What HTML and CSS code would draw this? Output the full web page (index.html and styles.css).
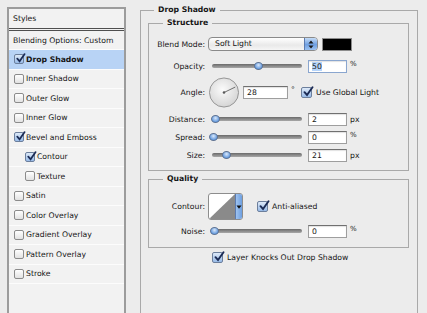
FILE: index.html
```html
<!DOCTYPE html>
<html lang="en">
<head>
    <meta charset="UTF-8">
    <title>Layer Style - Drop Shadow</title>
    <link rel="stylesheet" href="styles.css">
</head>
<body>
    <div class="styles-panel">
        <div class="panel-head">Styles</div>
        <div class="panel-blend">Blending Options: Custom</div>
        <ul class="style-list">
            <li class="selected"><span class="check on"><svg viewBox="0 0 12 12"><path d="M2.5 6.2 L5 9 L10.5 1.2"/></svg></span>Drop Shadow</li>
            <li><span class="check"></span>Inner Shadow</li>
            <li><span class="check"></span>Outer Glow</li>
            <li><span class="check"></span>Inner Glow</li>
            <li><span class="check on"><svg viewBox="0 0 12 12"><path d="M2.5 6.2 L5 9 L10.5 1.2"/></svg></span>Bevel and Emboss</li>
            <li class="sub"><span class="check on"><svg viewBox="0 0 12 12"><path d="M2.5 6.2 L5 9 L10.5 1.2"/></svg></span>Contour</li>
            <li class="sub"><span class="check"></span>Texture</li>
            <li><span class="check"></span>Satin</li>
            <li><span class="check"></span>Color Overlay</li>
            <li><span class="check"></span>Gradient Overlay</li>
            <li><span class="check"></span>Pattern Overlay</li>
            <li><span class="check"></span>Stroke</li>
        </ul>
    </div>

    <fieldset class="group outer">
        <legend>Drop Shadow</legend>

        <fieldset class="group structure">
            <legend>Structure</legend>
            <div class="rows">
                <div class="row row-blend">
                    <span class="label">Blend Mode:</span>
                    <div class="select">
                        <span class="select-text">Soft Light</span>
                        <span class="stepper">
                            <svg viewBox="0 0 6 9" width="6" height="9"><path d="M3 0.5 L5.5 3.5 L0.5 3.5 Z M3 8.5 L5.5 5.5 L0.5 5.5 Z"/></svg>
                        </span>
                    </div>
                    <span class="swatch"></span>
                </div>

                <div class="row">
                    <span class="label">Opacity:</span>
                    <div class="slider"><span class="thumb" style="left: 50%"></span></div>
                    <span class="field focused"><span class="sel">50</span></span>
                    <span class="unit pct">%</span>
                </div>

                <div class="row row-angle">
                    <span class="label">Angle:</span>
                    <svg class="dial" viewBox="0 0 32 32" width="32" height="31">
                        <defs>
                            <radialGradient id="dialFill" cx="45%" cy="40%" r="65%">
                                <stop offset="0" stop-color="#fbfbfb"/>
                                <stop offset="1" stop-color="#d2d2d2"/>
                            </radialGradient>
                        </defs>
                        <circle cx="16" cy="16" r="15" fill="url(#dialFill)" stroke="#939393"/>
                        <line x1="16" y1="16" x2="27.6" y2="10.4" stroke="#6a6a6a" stroke-width="1"/>
                        <circle cx="16" cy="16" r="1.3" fill="#5a5a5a"/>
                    </svg>
                    <span class="field wide">28</span>
                    <span class="unit deg">°</span>
                    <span class="check big on"><svg viewBox="0 0 12 12"><path d="M2.5 6.2 L5 9 L10.5 1.2"/></svg></span>
                    <span class="check-label">Use Global Light</span>
                </div>

                <div class="row">
                    <span class="label">Distance:</span>
                    <div class="slider"><span class="thumb" style="left: 2%"></span></div>
                    <span class="field">2</span>
                    <span class="unit">px</span>
                </div>

                <div class="row">
                    <span class="label">Spread:</span>
                    <div class="slider"><span class="thumb" style="left: 0%"></span></div>
                    <span class="field">0</span>
                    <span class="unit pct">%</span>
                </div>

                <div class="row">
                    <span class="label">Size:</span>
                    <div class="slider"><span class="thumb" style="left: 14%"></span></div>
                    <span class="field">21</span>
                    <span class="unit">px</span>
                </div>
            </div>
        </fieldset>

        <fieldset class="group quality">
            <legend>Quality</legend>
            <div class="rows">
                <div class="row row-contour">
                    <span class="label">Contour:</span>
                    <div class="contour">
                        <svg class="contour-curve" viewBox="0 0 26 26" width="26" height="25" preserveAspectRatio="none">
                            <path d="M0 26 L26 0 L26 26 Z" fill="#8a8a8a"/>
                        </svg>
                        <span class="contour-arrow">
                            <svg viewBox="0 0 6 4" width="6" height="4"><path d="M0.5 0.5 L5.5 0.5 L3 3.8 Z"/></svg>
                        </span>
                    </div>
                    <span class="check big on aa"><svg viewBox="0 0 12 12"><path d="M2.5 6.2 L5 9 L10.5 1.2"/></svg></span>
                    <span class="check-label">Anti-aliased</span>
                </div>

                <div class="row">
                    <span class="label">Noise:</span>
                    <div class="slider"><span class="thumb" style="left: 1%"></span></div>
                    <span class="field">0</span>
                    <span class="unit pct">%</span>
                </div>
            </div>
        </fieldset>

        <div class="row knockout">
            <span class="check big on"><svg viewBox="0 0 12 12"><path d="M2.5 6.2 L5 9 L10.5 1.2"/></svg></span>
            <span class="check-label">Layer Knocks Out Drop Shadow</span>
        </div>
    </fieldset>
</body>
</html>
```
FILE: styles.css
```css
* {
    box-sizing: border-box;
}
body {
    margin: 0;
    padding: 4px 0 0 7px;
    height: 313px;
    overflow: hidden;
    display: flex;
    align-items: flex-start;
    background-color: #ececec;
    font-family: "DejaVu Sans", Verdana, sans-serif;
    font-size: 7.7px;
    color: #161616;
}

/* left styles list */
.styles-panel {
    width: 119px;
    height: 330px;
    margin-top: 3px;
    border: 2px solid #9c9c9c;
    background: #f2f2f2;
    flex: none;
}
.panel-head {
    height: 22px;
    padding-left: 4px;
    display: flex;
    align-items: center;
    border-bottom: 3px double #4f4f4f;
}
.panel-blend {
    height: 19px;
    padding-left: 4px;
    display: flex;
    align-items: center;
    border-bottom: 1px solid #fcfcfc;
}
.style-list {
    list-style: none;
    margin: 0;
    padding: 0;
}
.style-list li {
    height: 19.5px;
    padding-left: 5px;
    display: flex;
    align-items: center;
    gap: 2px;
    border-bottom: 1px solid #fcfcfc;
}
.style-list li.sub {
    padding-left: 16px;
}
.style-list li.selected {
    background: #b8d3f5;
    font-weight: bold;
}

/* checkboxes */
.check {
    position: relative;
    flex: none;
    width: 10px;
    height: 10px;
    border: 1px solid #8b8b8b;
    border-radius: 2px;
    background: linear-gradient(#ffffff, #e2e2e2);
}
.check.on {
    border-color: #6c7f9c;
    background: linear-gradient(#dde9f8, #98bbe8);
}
.check svg {
    position: absolute;
    left: 0;
    top: -2px;
    width: 11px;
    height: 11px;
    fill: none;
    stroke: #1b2b55;
    stroke-width: 1.9;
    stroke-linecap: round;
}
.check.big {
    width: 11px;
    height: 11px;
}
.check.big svg {
    width: 12px;
    height: 12px;
}
.check-label {
    margin-left: 4px;
    white-space: nowrap;
}

/* group boxes */
.group {
    margin: 0;
    border: 1px solid #a9a9a9;
    min-inline-size: 0;
}
.group legend {
    font-weight: bold;
    line-height: 12px;
    padding: 0 4px;
}
.outer {
    flex: none;
    width: 278px;
    height: 330px;
    margin-left: 14px;
    padding: 0 8px 0 7px;
}
.outer > legend {
    margin-left: 6px;
}
.structure {
    margin-top: 1px;
    padding: 8px 0 8px 0;
}
.quality {
    margin-top: 2px;
    padding: 8px 0 9px 0;
}
.structure > legend,
.quality > legend {
    margin-left: 14px;
}

/* rows */
.rows {
    display: flex;
    flex-direction: column;
    gap: 4px;
}
.row {
    display: flex;
    align-items: center;
    height: 14px;
    flex: none;
}
.row-blend {
    margin-bottom: 4px;
}
.row-angle {
    height: 31px;
}
.row-contour {
    height: 27px;
}
.label {
    flex: none;
    width: 56px;
    margin-right: 3px;
    text-align: right;
    white-space: nowrap;
}

/* blend mode select */
.select {
    width: 110px;
    height: 14px;
    display: flex;
    border: 1px solid #8a8a8a;
    border-radius: 4px;
    background: linear-gradient(#ffffff, #e9e9e9 60%, #f6f6f6);
    overflow: hidden;
}
.select-text {
    flex: 1;
    padding-left: 6px;
    line-height: 12px;
}
.stepper {
    width: 13px;
    display: flex;
    align-items: center;
    justify-content: center;
    border-left: 1px solid #5b7bb0;
    background: linear-gradient(#c5dcf7, #6fa0e2 55%, #9cc2f1);
}
.stepper svg {
    fill: #1a1a1a;
}
.swatch {
    width: 30px;
    height: 13px;
    margin-left: 4px;
    background: #000;
    border: 1px solid #8c8c8c;
}

/* sliders */
.slider {
    position: relative;
    flex: none;
    width: 90px;
    height: 4px;
    margin-left: 4px;
    border-radius: 2px;
    background: linear-gradient(#6a6a6a, #a8a8a8);
}
.thumb {
    position: absolute;
    top: 50%;
    width: 9px;
    height: 8px;
    margin: -4px 0 0 -3px;
    border-radius: 50%;
    border: 1px solid #5f7393;
    background: radial-gradient(circle at 50% 35%, #dbe9fb, #5f97dd 75%);
}

/* numeric fields */
.field {
    flex: none;
    width: 39px;
    height: 13px;
    margin-left: 6px;
    padding-left: 3px;
    display: flex;
    align-items: center;
    background: #fff;
    border: 1px solid #9e9e9e;
    border-top-color: #707070;
    box-shadow: inset 0 1px 1px rgba(0, 0, 0, 0.12);
}
.field.focused {
    border-color: #8aa6cf;
}
.field .sel {
    background: #b5d4fa;
}
.field.wide {
    width: 45px;
    margin-left: 3px;
}
.unit {
    margin-left: 3px;
}
.unit.pct {
    align-self: flex-start;
    font-size: 7px;
    margin-top: 1px;
}
.unit.deg {
    align-self: flex-start;
    margin-top: 8px;
    margin-left: 3px;
    width: 7px;
}
.row-angle .check {
    margin-left: 3px;
}
.dial {
    flex: none;
}

/* contour picker */
.contour {
    display: flex;
    width: 35px;
    height: 27px;
    border: 1px solid #8d8d8d;
    border-radius: 3px;
    overflow: hidden;
    background: #fff;
}
.contour-curve {
    display: block;
}
.contour-arrow {
    flex: 1;
    display: flex;
    align-items: center;
    justify-content: center;
    border-left: 1px solid #5b7bb0;
    background: linear-gradient(90deg, #9fc3f0, #6d9fe0);
}
.contour-arrow svg {
    fill: #111;
}
.check.aa {
    margin-left: 14px;
}

.knockout {
    margin-top: 2px;
    padding-left: 64px;
}
```
